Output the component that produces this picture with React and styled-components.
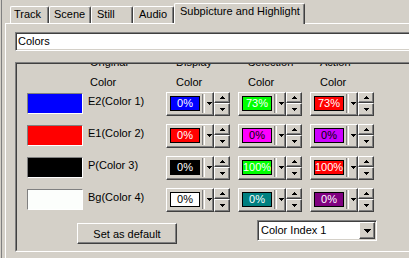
import React from "react";
import styled, { createGlobalStyle } from "styled-components";

const FACE = "#d4d0c8";
const SHADOW = "#808080";
const DARK = "#404040";

const GlobalStyle = createGlobalStyle`
  html, body {
    margin: 0;
    padding: 0;
    background: ${FACE};
  }
  body {
    font-family: "Liberation Sans", Arial, sans-serif;
    font-size: 11px;
    color: #000;
  }
  #root {
    width: 409px;
    height: 258px;
    overflow: hidden;
  }
`;

const Frame = styled.div`
  height: 258px;
  margin-left: 1px;
  border-left: 1px solid ${SHADOW};
  padding-left: 3px;
  display: flex;
  flex-direction: column;
`;

const TabStrip = styled.div`
  height: 23px;
  flex-shrink: 0;
  display: flex;
  align-items: flex-end;
  padding-left: 5px;
  position: relative;
  z-index: 1;
`;

const Tab = styled.div`
  box-sizing: border-box;
  width: ${(p) => p.$width}px;
  height: ${(p) => (p.$active ? 21 : 17)}px;
  margin-bottom: ${(p) => (p.$active ? -1 : 0)}px;
  padding: 1px 0 0 ${(p) => p.$pad}px;
  background: ${FACE};
  border-top: 1px solid #fff;
  border-left: 1px solid #fff;
  border-right: 1px solid ${DARK};
  border-radius: 2px 2px 0 0;
  box-shadow: inset -1px 0 ${SHADOW};
  line-height: 13px;
  white-space: nowrap;
`;

const Panel = styled.div`
  flex: 1;
  width: 440px;
  border-top: 1px solid #fff;
  border-left: 1px solid #fff;
  padding: 8px 0 0 9px;
  display: flex;
  flex-direction: column;
`;

const Field = styled.div`
  box-sizing: border-box;
  height: 19px;
  background: #fff;
  border: 1px solid;
  border-color: ${SHADOW} #fff #fff ${SHADOW};
  box-shadow: inset 1px 1px ${DARK}, inset -1px -1px ${FACE};
  padding-left: 2px;
  line-height: 17px;
`;

const Group = styled.div`
  box-sizing: border-box;
  height: 190px;
  margin-top: 11px;
  display: flex;
  border: 1px solid;
  border-color: ${SHADOW} #fff #fff ${SHADOW};
`;

const GroupInner = styled.div`
  flex: 1;
  overflow: hidden;
  border: 1px solid;
  border-color: ${DARK} ${FACE} ${FACE} ${DARK};
`;

const Content = styled.div`
  margin-top: -12px;
  padding-left: 10px;
`;

const COLUMNS = "61px 78px 72px 72px 72px";

const HeadRow = styled.div`
  display: grid;
  grid-template-columns: ${COLUMNS};
  line-height: 20px;
`;

const HeadCell = styled.div`
  padding-left: ${(p) => p.$indent || 0}px;
  white-space: nowrap;
`;

const Rows = styled.div`
  display: flex;
  flex-direction: column;
  gap: 8px;
`;

const Row = styled.div`
  display: grid;
  grid-template-columns: ${COLUMNS};
  height: 24px;
`;

const Swatch = styled.div`
  box-sizing: border-box;
  width: 56px;
  height: 21px;
  margin-top: 1px;
  background: ${(p) => p.$color};
  border: 1px solid;
  border-color: ${SHADOW} #fff #fff ${SHADOW};
`;

const Label = styled.div`
  padding-top: 3px;
  line-height: 13px;
  white-space: nowrap;
`;

const Picker = styled.div`
  display: flex;
`;

const Combo = styled.div`
  box-sizing: border-box;
  width: 48px;
  height: 24px;
  display: flex;
  align-items: flex-start;
  padding: 3px 0 0 3px;
  background: ${FACE};
  border: 1px solid;
  border-color: #fff ${DARK} ${DARK} #fff;
  box-shadow: inset -1px -1px ${SHADOW};
`;

const ColorBox = styled.div`
  box-sizing: border-box;
  width: 30px;
  height: 15px;
  border: 1px solid #000;
  background: ${(p) => p.$bg};
  color: ${(p) => p.$fg};
  display: flex;
  align-items: center;
  justify-content: center;
  line-height: 13px;
`;

const Etch = styled.div`
  width: 1px;
  height: 19px;
  margin: -2px 0 0 2px;
  border-left: 1px solid ${SHADOW};
  border-right: 1px solid #fff;
`;

const ComboArrow = styled.div`
  display: flex;
  margin: 6px 0 0 2px;
`;

const Spin = styled.div`
  width: 16px;
  height: 24px;
  display: flex;
  flex-direction: column;
`;

const RaisedButton = styled.div`
  box-sizing: border-box;
  height: ${(p) => p.$height}px;
  display: flex;
  align-items: center;
  justify-content: center;
  background: ${FACE};
  border: 1px solid;
  border-color: #fff ${DARK} ${DARK} #fff;
  box-shadow: inset -1px -1px ${SHADOW};
`;

const Footer = styled.div`
  display: flex;
  align-items: flex-start;
  padding-top: 8px;
`;

const PushButton = styled.button`
  box-sizing: border-box;
  width: 100px;
  height: 21px;
  margin: 3px 0 0 50px;
  padding: 0;
  font: inherit;
  color: #000;
  background: ${FACE};
  border: 1px solid;
  border-color: #fff ${DARK} ${DARK} #fff;
  box-shadow: inset -1px -1px ${SHADOW};
`;

const Select = styled.div`
  box-sizing: border-box;
  width: 120px;
  height: 21px;
  margin-left: 80px;
  display: flex;
  background: #fff;
  border: 1px solid;
  border-color: ${SHADOW} #fff #fff ${SHADOW};
  box-shadow: inset 1px 1px ${DARK}, inset -1px -1px ${FACE};
  padding: 1px;
`;

const SelectText = styled.div`
  flex: 1;
  padding-left: 2px;
  line-height: 17px;
`;

const SelectButton = styled(RaisedButton)`
  width: 16px;
  height: 17px;
`;

const Arrow = ({ dir = "down", width = 5 }) => {
  const rows = Math.ceil(width / 2);
  const rects = [];
  for (let i = 0; i < rows; i++) {
    const y = dir === "down" ? i : rows - 1 - i;
    rects.push(<rect key={i} x={i} y={y} width={width - i * 2} height={1} />);
  }
  return (
    <svg width={width} height={rows} viewBox={`0 0 ${width} ${rows}`} fill="#000">
      {rects}
    </svg>
  );
};

const tabs = [
  { name: "Track", width: 39, pad: 3 },
  { name: "Scene", width: 42, pad: 4 },
  { name: "Still", width: 42, pad: 5 },
  { name: "Audio", width: 41, pad: 5 },
  { name: "Subpicture and Highlight", width: 131, pad: 5, active: true },
];

const W = "#fff";
const K = "#000";

const rows = [
  {
    swatch: "#0000ff",
    label: "E2(Color 1)",
    cells: [
      { bg: "#0000ff", fg: W, value: "0%" },
      { bg: "#00ff00", fg: W, value: "73%" },
      { bg: "#ff0000", fg: W, value: "73%" },
    ],
  },
  {
    swatch: "#ff0000",
    label: "E1(Color 2)",
    cells: [
      { bg: "#ff0000", fg: W, value: "0%" },
      { bg: "#ff00ff", fg: K, value: "0%" },
      { bg: "#cc00ff", fg: K, value: "0%" },
    ],
  },
  {
    swatch: "#000000",
    label: "P(Color 3)",
    cells: [
      { bg: "#000000", fg: W, value: "0%" },
      { bg: "#00ff00", fg: W, value: "100%" },
      { bg: "#ff0000", fg: W, value: "100%" },
    ],
  },
  {
    swatch: "#fcfefc",
    label: "Bg(Color 4)",
    cells: [
      { bg: "#ffffff", fg: K, value: "0%" },
      { bg: "#008080", fg: W, value: "0%" },
      { bg: "#800080", fg: W, value: "0%" },
    ],
  },
];

const ColorPicker = ({ bg, fg, value }) => (
  <Picker>
    <Combo>
      <ColorBox $bg={bg} $fg={fg}>
        {value}
      </ColorBox>
      <Etch />
      <ComboArrow>
        <Arrow />
      </ComboArrow>
    </Combo>
    <Spin>
      <RaisedButton $height={11}>
        <Arrow dir="up" />
      </RaisedButton>
      <RaisedButton $height={13}>
        <Arrow />
      </RaisedButton>
    </Spin>
  </Picker>
);

const App = () => (
  <>
    <GlobalStyle />
    <Frame>
      <TabStrip>
        {tabs.map((t) => (
          <Tab key={t.name} $width={t.width} $pad={t.pad} $active={t.active}>
            {t.name}
          </Tab>
        ))}
      </TabStrip>
      <Panel>
        <Field>Colors</Field>
        <Group>
          <GroupInner>
            <Content>
              <HeadRow>
                <div />
                <HeadCell $indent={2}>
                  Original
                  <br />
                  Color
                </HeadCell>
                <HeadCell $indent={10}>
                  Display
                  <br />
                  Color
                </HeadCell>
                <HeadCell $indent={10}>
                  Selection
                  <br />
                  Color
                </HeadCell>
                <HeadCell $indent={10}>
                  Action
                  <br />
                  Color
                </HeadCell>
              </HeadRow>
              <Rows>
                {rows.map((r) => (
                  <Row key={r.label}>
                    <Swatch $color={r.swatch} />
                    <Label>{r.label}</Label>
                    {r.cells.map((c, i) => (
                      <ColorPicker key={i} {...c} />
                    ))}
                  </Row>
                ))}
              </Rows>
              <Footer>
                <PushButton>Set as default</PushButton>
                <Select>
                  <SelectText>Color Index 1</SelectText>
                  <SelectButton>
                    <Arrow width={7} />
                  </SelectButton>
                </Select>
              </Footer>
            </Content>
          </GroupInner>
        </Group>
      </Panel>
    </Frame>
  </>
);

export default App;
